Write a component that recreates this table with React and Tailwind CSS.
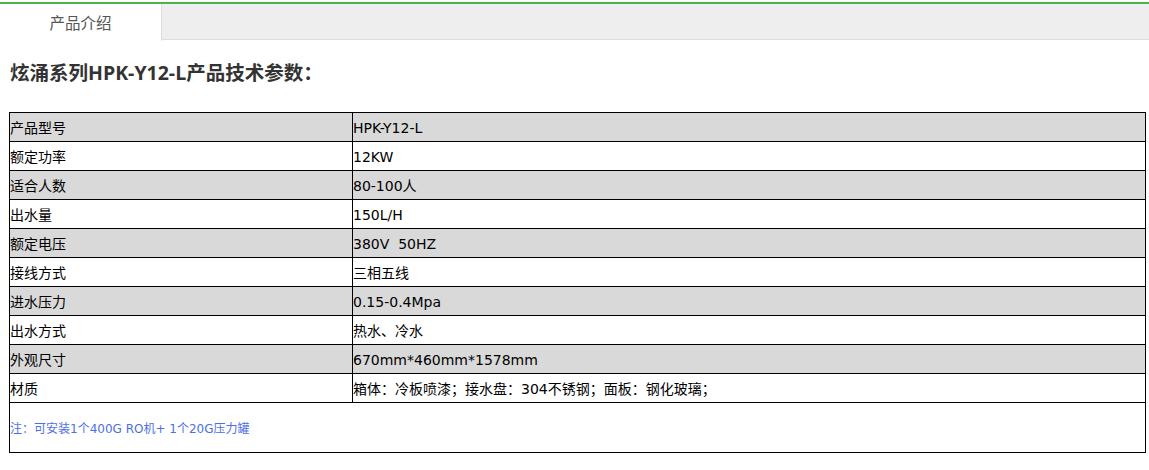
import React from "react";

const rows = [
  ["产品型号", "HPK-Y12-L"],
  ["额定功率", "12KW"],
  ["适合人数", "80-100人"],
  ["出水量", "150L/H"],
  ["额定电压", "380V\u00a0\u00a050HZ"],
  ["接线方式", "三相五线"],
  ["进水压力", "0.15-0.4Mpa"],
  ["出水方式", "热水、冷水"],
  ["外观尺寸", "670mm*460mm*1578mm"],
  ["材质", "箱体：冷板喷漆；接水盘：304不锈钢；面板：钢化玻璃；"],
];

const tableFont = { fontFamily: '"DejaVu Sans", "Noto Sans CJK SC", sans-serif' };

export default function App() {
  return (
    <div
      className="w-[1149px] h-[470px] bg-white overflow-hidden"
      style={{ fontFamily: '"Open Sans", "Noto Sans CJK SC", sans-serif' }}
    >
      <div className="pt-[2px]">
        <div className="border-t-2 border-[#4cb34a] flex h-[38px] bg-[#eeeeee] border-b border-b-[#dddddd]">
          <div className="w-[162px] bg-white border-r border-[#dddddd] h-[37px] -mb-px flex items-center justify-center pt-[3px] text-[15.5px] text-[#555]">
            产品介绍
          </div>
          <div className="flex-1" />
        </div>
      </div>
      <div className="px-[9px]">
        <h2 className="mt-[19px] ml-px text-[19.5px] font-bold text-[#333] leading-[28px]">
          炫涌系列HPK-Y12-L产品技术参数：
        </h2>
        <table className="mt-[25px] w-[1137px] border-collapse text-[14px] text-black" style={tableFont}>
          <tbody>
            {rows.map(([k, v], i) => (
              <tr key={k} className={i % 2 === 0 ? "bg-[#d9d9d9]" : "bg-white"}>
                <td className="border border-black h-[29px] w-[343px] p-0 pt-[2px] leading-[18px] align-middle">
                  {k}
                </td>
                <td className="border border-black h-[29px] p-0 pt-[2px] leading-[18px] align-middle">
                  {v}
                </td>
              </tr>
            ))}
            <tr>
              <td
                colSpan={2}
                className="border border-black h-[50px] p-0 pt-[2px] text-[12px] text-[#4d6fe6] align-middle"
              >
                注：可安装1个400G RO机+ 1个20G压力罐
              </td>
            </tr>
          </tbody>
        </table>
      </div>
    </div>
  );
}
